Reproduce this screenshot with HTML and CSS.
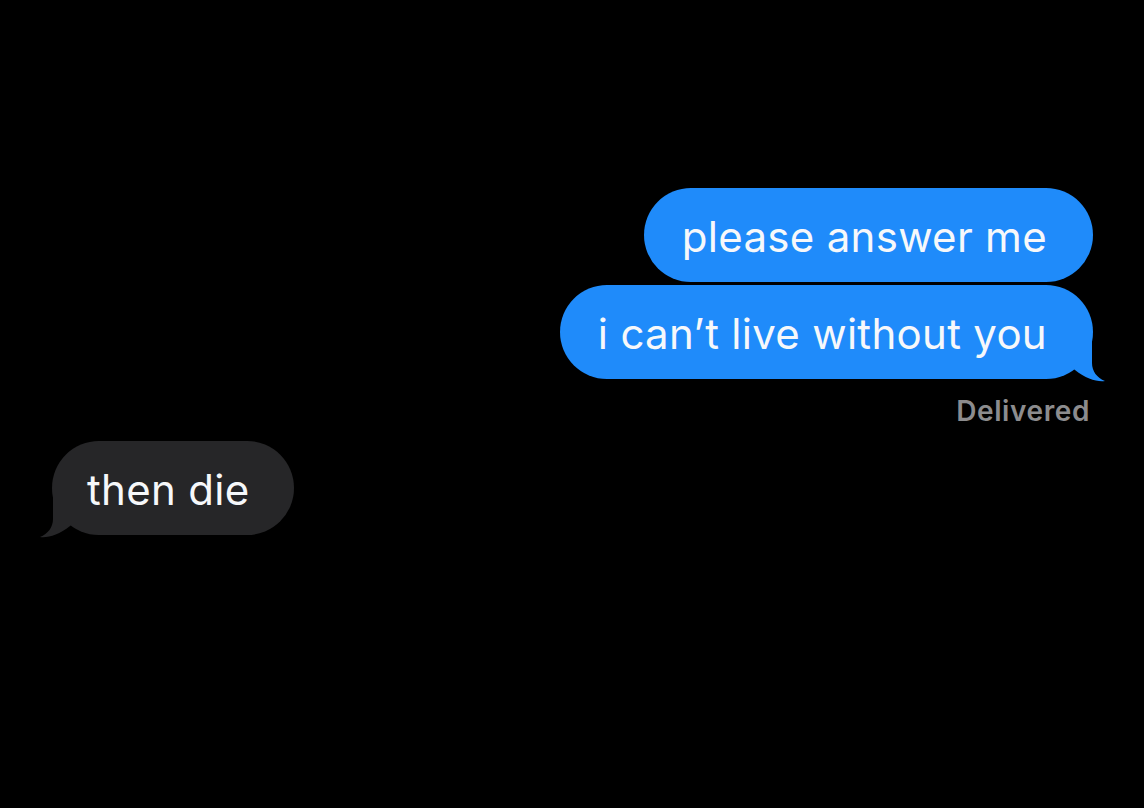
FILE: index.html
```html
<!DOCTYPE html>
<html lang="en">
<head>
<meta charset="utf-8">
<title>Messages</title>
<link rel="stylesheet" href="styles.css">
</head>
<body>
<main class="thread">
  <section class="group group-sent">
    <div class="bubble sent">please answer me</div>
    <div class="bubble sent has-tail">i can’t live without you<svg class="tail" viewBox="0 0 50 50" width="50" height="50" aria-hidden="true"><path d="M0 0 L36 0 L36 30 C36 38 41 45 49 48 C41 49 30 46 19 37 L0 20 Z"/></svg></div>
    <div class="status">Delivered</div>
  </section>
  <section class="group group-received">
    <div class="bubble received has-tail">then die<svg class="tail" viewBox="0 0 50 50" width="50" height="50" aria-hidden="true"><path d="M0 0 L36 0 L36 30 C36 38 41 45 49 48 C41 49 30 46 19 37 L0 20 Z"/></svg></div>
  </section>
</main>
</body>
</html>
```
FILE: styles.css
```css
html, body {
  margin: 0;
  padding: 0;
  background: #000;
}

body {
  width: 1144px;
  height: 808px;
  overflow: hidden;
  font-family: Inter, "Liberation Sans", Arial, sans-serif;
  color: #f6f8fa;
}

.thread {
  display: flex;
  flex-direction: column;
  padding: 188px 51px 0 52px;
}

.group {
  display: flex;
  flex-direction: column;
  gap: 3px;
}

.group-sent {
  align-items: flex-end;
}

.group-received {
  align-items: flex-start;
  margin-top: 14px;
}

.bubble {
  position: relative;
  box-sizing: border-box;
  height: 94px;
  padding-top: 24px;
  font-size: 42px;
  line-height: 50px;
  letter-spacing: 0.3px;
  border-radius: 47px;
  white-space: nowrap;
}

.sent {
  background: #1f8bfa;
  padding-left: 38px;
  padding-right: 46px;
}

.received {
  background: #262628;
  padding-left: 35px;
  padding-right: 45px;
}

.tail {
  position: absolute;
  bottom: -4px;
  width: 50px;
  height: 50px;
}

.sent .tail {
  right: -13px;
  fill: #1f8bfa;
}

.received .tail {
  left: -13px;
  fill: #262628;
  transform: scaleX(-1);
}

.status {
  margin-top: 13px;
  margin-right: 3px;
  font-size: 28px;
  line-height: 32px;
  font-weight: 600;
  letter-spacing: 0.6px;
  color: #8c8c8e;
}
```
